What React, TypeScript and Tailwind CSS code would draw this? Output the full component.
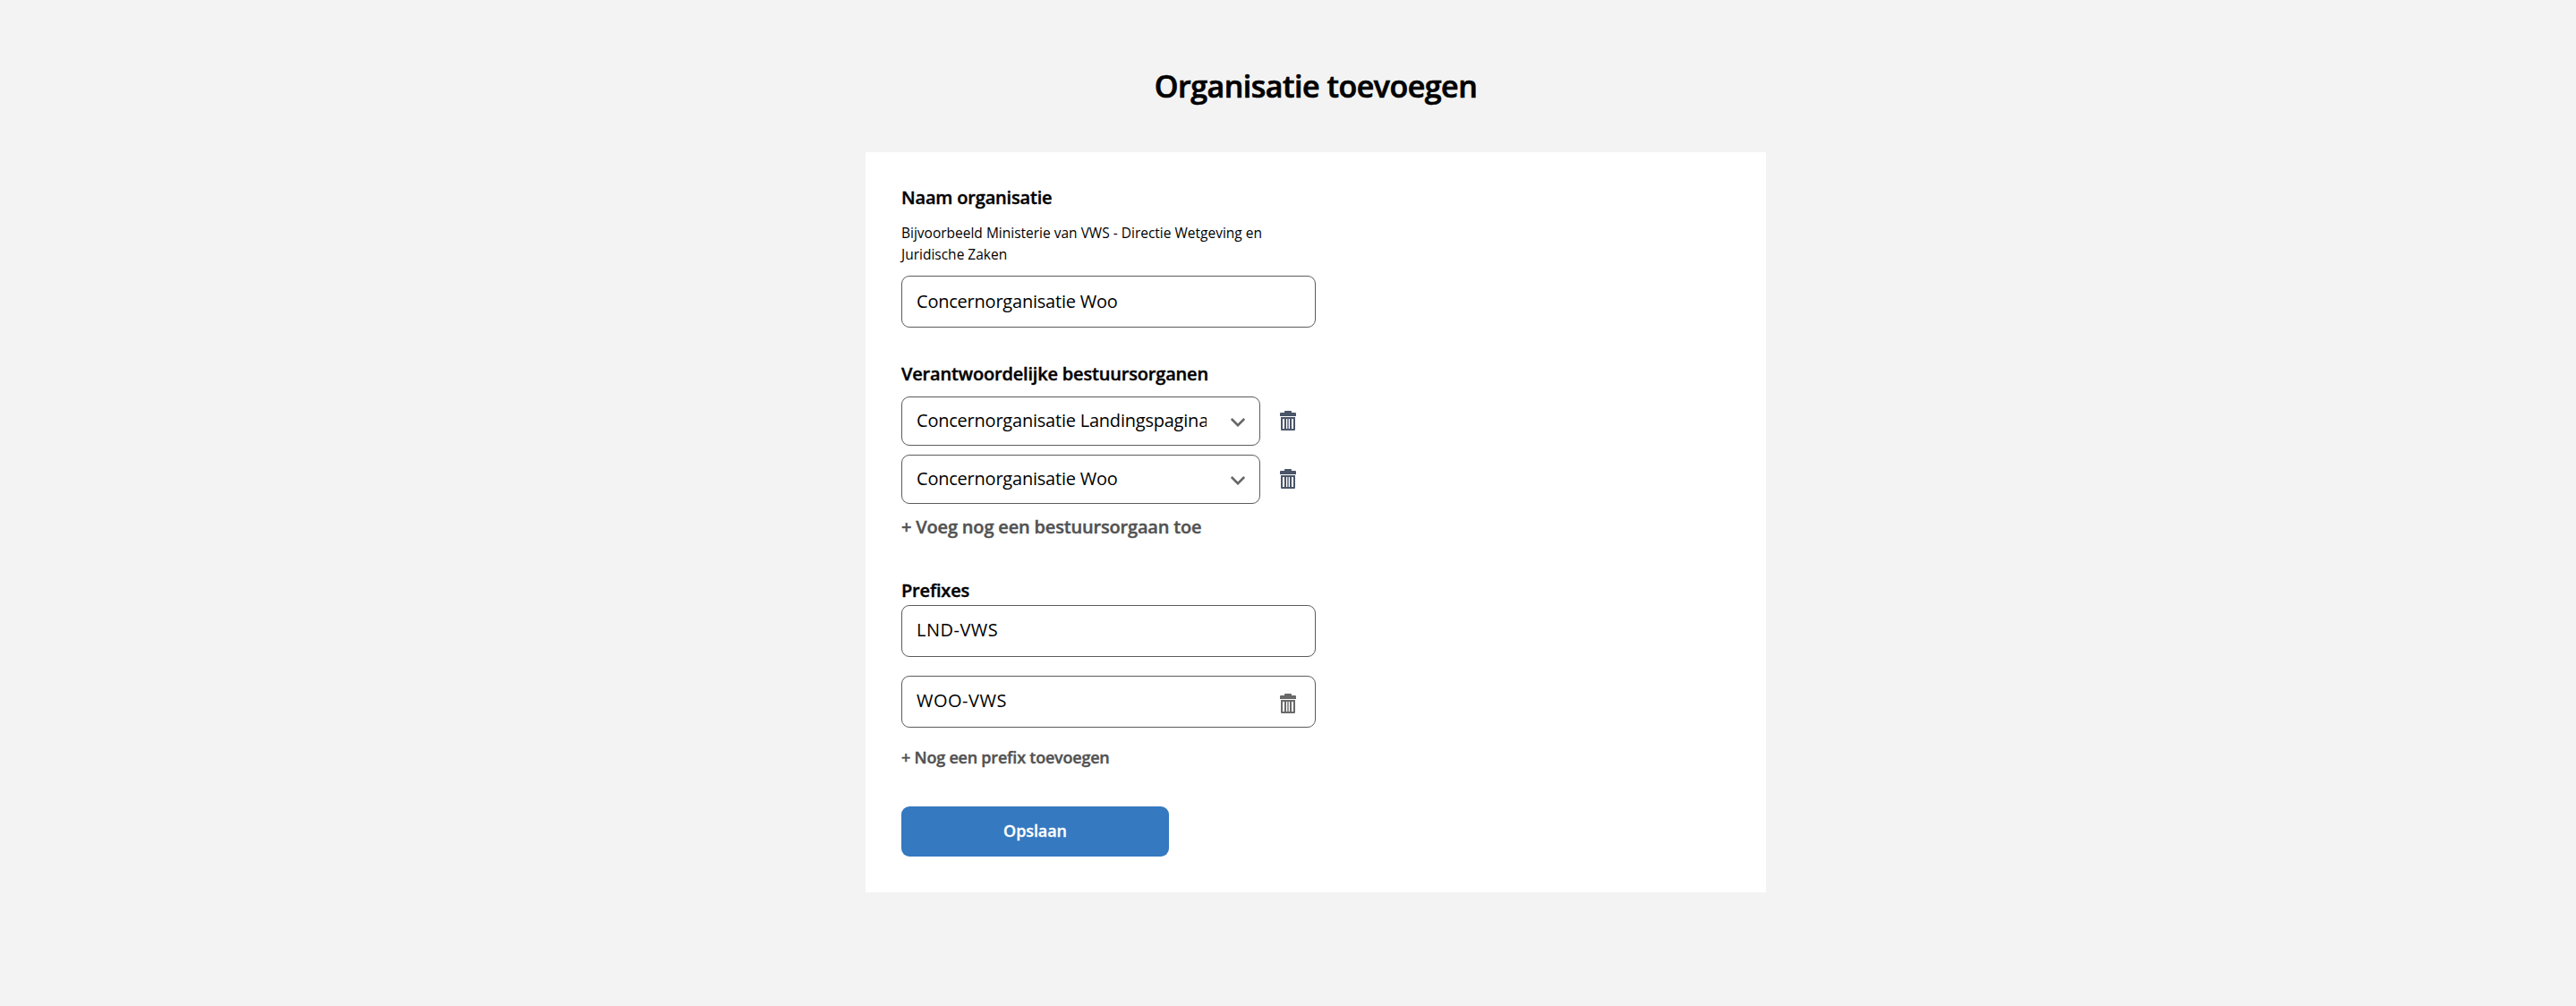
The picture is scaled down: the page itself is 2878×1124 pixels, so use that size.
const label = 'text-[20px] leading-6 font-semibold tracking-[-0.18px] text-black [-webkit-text-stroke:0.4px]';
const field = 'flex items-center rounded-[9px] border border-[#5c5c5c] bg-white pl-4 text-[20px] leading-6 text-black';

function Trash({ className }: { className: string }) {
  return (
    <svg viewBox="0 0 18 22" className={`h-[22px] w-[18px] shrink-0 ${className}`} fill="currentColor" aria-hidden="true">
      <path d="M5 2V1q0-1 1-1h6q1 0 1 1v1h4q1 0 1 1v3H0V3q0-1 1-1z" />
      <path fillRule="evenodd" d="M1 7h16v14q0 1-1 1H2q-1 0-1-1zM3 9v11h2V9zM7 9v11h1.300V9zM9.700 9v11h1.300V9zM13 9v11h2V9z" />
    </svg>
  );
}

function Organ({ name }: { name: string }) {
  return (
    <div className="flex items-center">
      <div className={`${field} h-[55px] w-[401px] pb-[2px] tracking-[-0.22px]`}>
        <span className="w-[324px] overflow-hidden leading-8 whitespace-nowrap">{name}</span>
        <svg viewBox="0 0 16 10" className="mt-[5px] ml-[27px] h-[10px] w-4" fill="none" stroke="#666" strokeWidth="2.6">
          <path d="M.8 1 8 8.200 15.200 1" />
        </svg>
      </div>
      <button className="mb-px ml-[22px]" aria-label="Verwijder bestuursorgaan">
        <Trash className="text-[#4a5568]" />
      </button>
    </div>
  );
}

export default function App() {
  return (
    <main className="flex h-[1124px] flex-col bg-[#f3f3f3] pl-[967px] font-['Open_Sans',sans-serif]">
      <div className="w-[1006px] pt-[76px]">
        <h1 className="text-center text-[34px] leading-10 font-semibold tracking-[-0.5px] text-black [-webkit-text-stroke:0.7px]">Organisatie toevoegen</h1>
        <form className="mt-[54px] h-[827px] bg-white pt-[39px] pl-10">
          <div className={label}>Naam organisatie</div>
          <p className="mt-[15px] w-[420px] text-[15.5px] leading-6 text-black">
            Bijvoorbeeld Ministerie van VWS - Directie Wetgeving en Juridische Zaken
          </p>
          <div className={`${field} mt-3 h-[58px] w-[463px] tracking-[-0.22px]`}>Concernorganisatie Woo</div>

          <div className={`${label} mt-10`}>Verantwoordelijke bestuursorganen</div>
          <div className="mt-[13px] flex flex-col gap-[10px]">
            <Organ name="Concernorganisatie Landingspagina" />
            <Organ name="Concernorganisatie Woo" />
          </div>
          <div className="mt-[14px] text-[20px] leading-6 font-semibold tracking-[-0.18px] text-[#525252] [-webkit-text-stroke:0.4px]">+ Voeg nog een bestuursorgaan toe</div>

          <div className={`${label} mt-[47px]`}>Prefixes</div>
          <div className={`${field} mt-1 h-[58px] w-[463px] pb-[2px] tracking-[0.5px]`}>LND-VWS</div>
          <div className={`${field} mt-[21px] h-[58px] w-[463px] justify-between pr-[21px] pb-[2px] tracking-[0.5px]`}>
            WOO-VWS
            <Trash className="mt-[6px] text-[#696969]" />
          </div>
          <div className="mt-[21px] text-[18px] leading-6 font-semibold tracking-[-0.22px] text-[#525252] [-webkit-text-stroke:0.4px]">+ Nog een prefix toevoegen</div>
          <button className="mt-[43px] flex h-14 w-[299px] items-center justify-center rounded-[9px] bg-[#3579c0] pb-[2px] text-[18px] font-semibold tracking-[-0.1px] text-white [-webkit-text-stroke:0.3px]">
            Opslaan
          </button>
        </form>
      </div>
    </main>
  );
}
